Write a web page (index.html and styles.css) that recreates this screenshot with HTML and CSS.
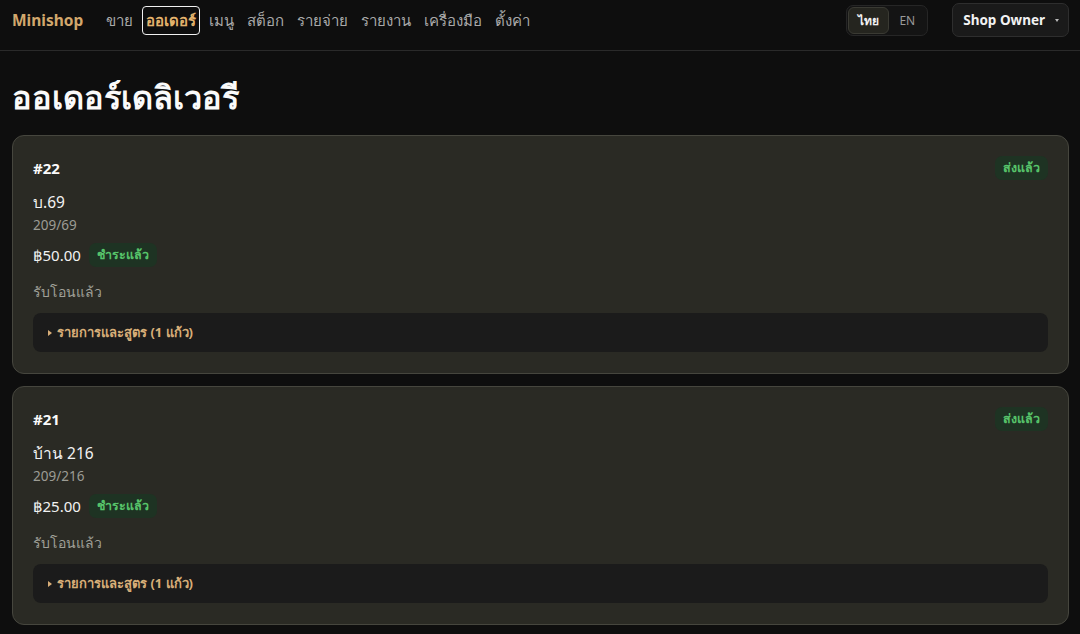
FILE: index.html
```html
<!DOCTYPE html>
<html lang="th">
<head>
<meta charset="utf-8">
<title>Minishop</title>
<link rel="stylesheet" href="styles.css">
</head>
<body>
<header class="nav">
  <div class="nav-left">
    <a class="brand">Minishop</a>
    <nav class="links">
      <a class="link">ขาย</a>
      <a class="link active">ออเดอร์</a>
      <a class="link">เมนู</a>
      <a class="link">สต็อก</a>
      <a class="link">รายจ่าย</a>
      <a class="link">รายงาน</a>
      <a class="link">เครื่องมือ</a>
      <a class="link">ตั้งค่า</a>
    </nav>
  </div>
  <div class="nav-right">
    <div class="lang">
      <button class="lang-btn on">ไทย</button>
      <button class="lang-btn">EN</button>
    </div>
    <button class="user">Shop Owner <span class="caret"></span></button>
  </div>
</header>
<main class="page">
  <h1 class="title">ออเดอร์เดลิเวอรี</h1>
  <section class="card">
    <div class="card-head">
      <span class="num">#22</span>
      <span class="badge">ส่งแล้ว</span>
    </div>
    <div class="name">บ.69</div>
    <div class="addr">209/69</div>
    <div class="price-row">
      <span class="price">฿50.00</span>
      <span class="badge">ชำระแล้ว</span>
    </div>
    <div class="note">รับโอนแล้ว</div>
    <details class="items">
      <summary>รายการและสูตร (1 แก้ว)</summary>
    </details>
  </section>
  <section class="card">
    <div class="card-head">
      <span class="num">#21</span>
      <span class="badge">ส่งแล้ว</span>
    </div>
    <div class="name">บ้าน 216</div>
    <div class="addr">209/216</div>
    <div class="price-row">
      <span class="price">฿25.00</span>
      <span class="badge">ชำระแล้ว</span>
    </div>
    <div class="note">รับโอนแล้ว</div>
    <details class="items">
      <summary>รายการและสูตร (1 แก้ว)</summary>
    </details>
  </section>
</main>
</body>
</html>
```
FILE: styles.css
```css
* { box-sizing: border-box; }
html, body { margin: 0; padding: 0; }
body {
  background: #0e0e0e;
  color: #f2f2f2;
  font-family: "Noto Sans", "Open Sans", "DejaVu Sans", sans-serif;
  overflow: hidden;
}
.nav {
  display: flex;
  justify-content: space-between;
  align-items: center;
  height: 51px;
  padding: 0 11px 10px 12px;
  border-bottom: 1px solid #2a2a2a;
}
.nav-left { display: flex; align-items: center; gap: 19px; }
.brand { color: #d2a76c; font-weight: 700; font-size: 15.5px; }
.links { display: flex; gap: 5px; }
.link {
  color: #a9a9a9;
  font-size: 15px;
  padding: 2px 3px;
  border: 1px solid transparent;
  border-radius: 4px;
  line-height: 23px;
}
.link.active {
  color: #e4b36c;
  font-weight: 700;
  border-color: #f0f0f0;
}
.nav-right { display: flex; align-items: center; gap: 24px; }
.lang {
  display: flex;
  align-items: center;
  gap: 0;
  padding: 1px;
  border: 1px solid #262626;
  border-radius: 7px;
  background: #141414;
}
.lang-btn {
  font-family: inherit;
  font-size: 12px;
  background: transparent;
  border: 1px solid transparent;
  color: #9a9a9a;
  height: 27px;
  padding: 0 9px;
  border-radius: 6px;
}
.lang-btn.on {
  background: #25251f;
  border-color: #3a3a33;
  color: #f2f2f2;
  font-weight: 700;
}
.lang-btn + .lang-btn { padding: 0 10px 0 9px; }
.user {
  font-family: inherit;
  font-size: 13.5px;
  font-weight: 700;
  color: #f2f2f2;
  background: #1a1a1a;
  border: 1px solid #2e2e2e;
  border-radius: 7px;
  height: 34px;
  padding: 0 9px 0 10px;
  display: flex;
  align-items: center;
  gap: 8px;
}
.caret {
  width: 0; height: 0;
  border-left: 2.5px solid transparent;
  border-right: 2.5px solid transparent;
  border-top: 3px solid #bbb;
  margin-left: 2px;
}
.page { padding: 0 11px 0 12px; }
.title {
  margin: 28px 0 20px;
  font-size: 32.5px;
  font-weight: 700;
  line-height: 36px;
  color: #fafafa;
}
.card {
  background: #2a2a24;
  border: 1px solid #46463e;
  border-radius: 12px;
  padding: 20px 20px 21px;
  margin-bottom: 12px;
}
.card-head {
  display: flex;
  justify-content: space-between;
  align-items: center;
  height: 24px;
}
.num { font-size: 15px; font-weight: 700; color: #fafafa; }
.badge {
  background: #1e3323;
  color: #57c46a;
  font-size: 12.5px;
  font-weight: 700;
  padding: 0 8px;
  height: 24px;
  line-height: 24px;
  border-radius: 7px;
}
.name { margin-top: 10px; font-size: 15.5px; line-height: 24px; color: #f2f2f2; }
.addr { font-size: 13.5px; line-height: 22px; color: #9c9c94; }
.price-row {
  margin-top: 7px;
  display: flex;
  align-items: center;
  gap: 8px;
  height: 24px;
}
.price { font-size: 15px; color: #f2f2f2; }
.note { margin-top: 14px; font-size: 14px; line-height: 22px; color: #a0a098; }
.items {
  margin-top: 10px;
  background: #1b1b1b;
  border-radius: 8px;
  height: 39px;
  padding: 0 15px;
}
.items summary {
  list-style: none;
  display: flex;
  align-items: center;
  height: 39px;
  font-size: 13px;
  font-weight: 700;
  color: #d8ae78;
}
.items summary::-webkit-details-marker { display: none; }
.items summary::before {
  content: "";
  width: 0; height: 0;
  border-top: 3px solid transparent;
  border-bottom: 3px solid transparent;
  border-left: 4px solid #d8ae78;
  margin-right: 5px;
}
```
